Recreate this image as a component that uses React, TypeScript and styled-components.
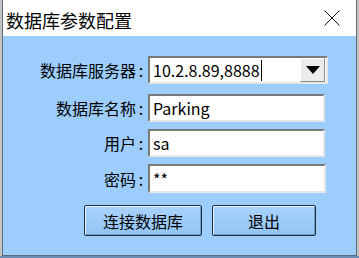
import React from 'react';
import styled, { createGlobalStyle } from 'styled-components';

const GlobalStyle = createGlobalStyle`
  html, body {
    margin: 0;
    padding: 0;
    width: 359px;
    height: 258px;
    overflow: hidden;
    background: linear-gradient(#c4c4c4, #c4c4c4) top / 100% 256px no-repeat, #6c8cb2;
    font-family: "Noto Sans CJK SC", "Noto Sans", sans-serif;
  }
`;

const Desk = styled.div`
  padding-left: 2px;
  display: flex;
`;

const Window = styled.div`
  width: 355px;
  height: 256px;
  box-sizing: border-box;
  border: 1px solid #5e6a78;
  border-top: none;
  display: flex;
  flex-direction: column;
  background: #9ccdfd;
`;

const TitleBar = styled.div`
  height: 36px;
  background: #ffffff;
  display: flex;
  align-items: center;
  justify-content: space-between;
  padding: 0 16px 0 3px;
`;

const Title = styled.span`
  font-size: 18px;
  line-height: 20px;
  color: #000;
  margin-top: 4px;
`;

const CloseIcon = () => (
  <svg width="16" height="16" viewBox="0 0 16 16">
    <path d="M0.5 0.5L15.5 15.5M15.5 0.5L0.5 15.5" stroke="#111" strokeWidth="1" />
  </svg>
);

const Client = styled.div`
  flex: 1;
  display: flex;
  flex-direction: column;
  padding-top: 20px;
`;

const Row = styled.div<{ $top: number }>`
  display: flex;
  align-items: center;
  margin-top: ${p => p.$top}px;
`;

const Label = styled.label`
  width: 143px;
  text-align: right;
  font-size: 16px;
  line-height: 20px;
  color: #000;
  padding-right: 2px;
  white-space: nowrap;
`;

const Colon = styled.span`
  display: inline-block;
  width: 10px;
  text-align: center;
`;

const Field = styled.div<{ $h: number; $w: number }>`
  width: ${p => p.$w}px;
  height: ${p => p.$h}px;
  box-sizing: border-box;
  background: #fff;
  border-top: 2px solid #7a7a7a;
  border-left: 2px solid #7a7a7a;
  border-right: 2px solid #e6e6e6;
  border-bottom: 2px solid #e6e6e6;
  display: flex;
  align-items: center;
  padding-left: 3px;
  font-size: 16px;
  color: #000;
`;

const Caret = styled.span`
  display: inline-block;
  width: 1px;
  height: 21px;
  background: #000;
  margin-left: 1px;
`;

const ComboText = styled.span`
  flex: 1;
  display: flex;
  align-items: center;
`;

const DropButton = styled.div`
  width: 25px;
  height: 24px;
  box-sizing: border-box;
  background: #ececec;
  border-top: 1px solid #ffffff;
  border-left: 1px solid #ffffff;
  border-right: 1px solid #8a8a8a;
  border-bottom: 1px solid #8a8a8a;
  display: flex;
  align-items: center;
  justify-content: center;
`;

const Buttons = styled.div`
  display: flex;
  gap: 10px;
  padding-left: 81px;
  margin-top: 12px;
`;

const Button = styled.button<{ $w: number }>`
  width: ${p => p.$w}px;
  height: 31px;
  box-sizing: border-box;
  border: 1px solid #1f2c3c;
  border-radius: 2px;
  background: linear-gradient(#a9d3fc, #92c4f4);
  box-shadow: inset 1px 1px 0 #e8f3ff, inset -1px -1px 0 #6f9cc8;
  font-family: inherit;
  font-size: 16px;
  line-height: 20px;
  color: #000;
  padding: 0;
`;

export default function App() {
  return (
    <Desk>
      <GlobalStyle />
      <Window>
        <TitleBar>
          <Title>数据库参数配置</Title>
          <CloseIcon />
        </TitleBar>
        <Client>
          <Row $top={0}>
            <Label>数据库服务器<Colon>:</Colon></Label>
            <Field $w={180} $h={28} style={{ paddingRight: 1 }}>
              <ComboText>
                10.2.8.89,8888
                <Caret />
              </ComboText>
              <DropButton>
                <svg width="14" height="8" viewBox="0 0 14 8">
                  <path d="M0 0H14L7 8Z" fill="#000" />
                </svg>
              </DropButton>
            </Field>
          </Row>
          <Row $top={10}>
            <Label>数据库名称<Colon>:</Colon></Label>
            <Field $w={177} $h={28}>Parking</Field>
          </Row>
          <Row $top={7}>
            <Label>用户<Colon>:</Colon></Label>
            <Field $w={177} $h={28}>sa</Field>
          </Row>
          <Row $top={7}>
            <Label>密码<Colon>:</Colon></Label>
            <Field $w={178} $h={29}>**</Field>
          </Row>
          <Buttons>
            <Button $w={118}>连接数据库</Button>
            <Button $w={104}>退出</Button>
          </Buttons>
        </Client>
      </Window>
    </Desk>
  );
}
